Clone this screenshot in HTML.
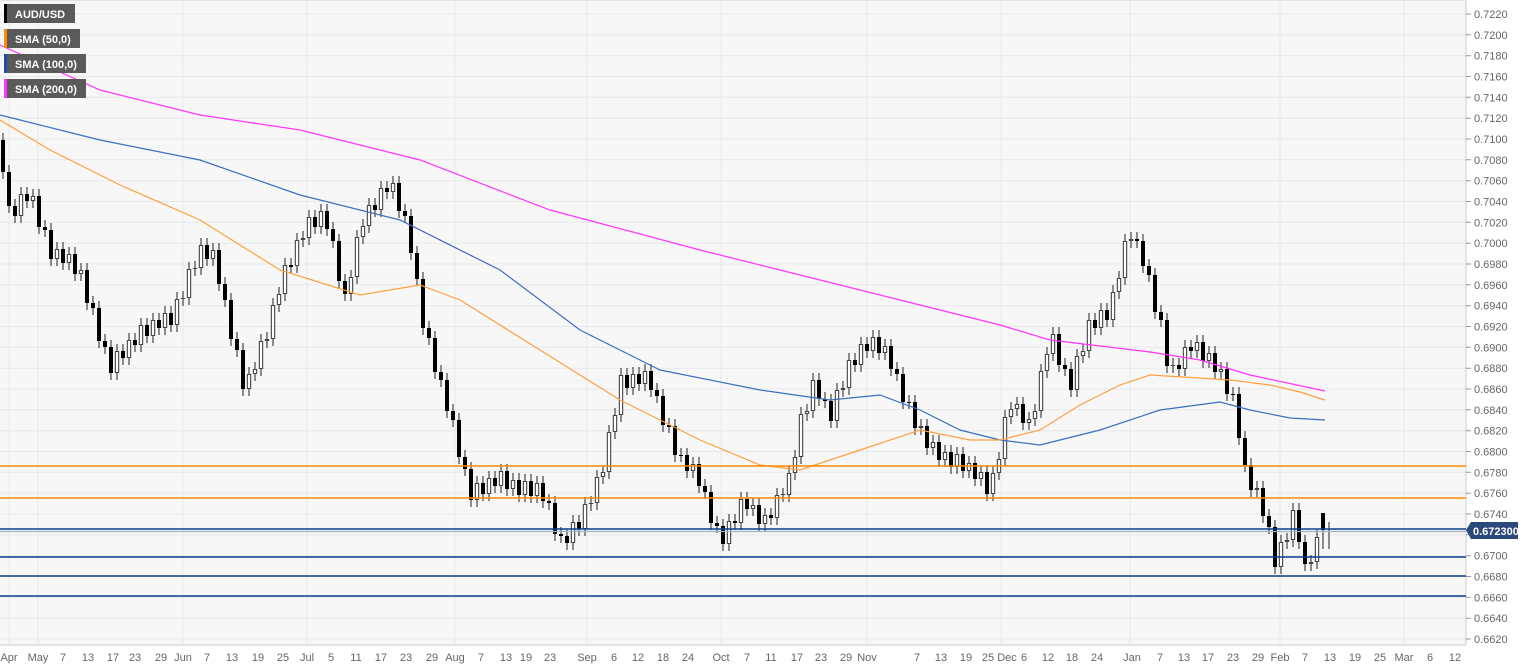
<!DOCTYPE html>
<html><head><meta charset="utf-8"><style>
body{margin:0;background:#fff}
svg{display:block}
text{font-family:"Liberation Sans",sans-serif}
</style></head><body>
<svg width="1536" height="669" xmlns="http://www.w3.org/2000/svg">
<rect x="0" y="0" width="1466" height="645" fill="#f7f7f7"/>
<g stroke="#e6e8ec" stroke-width="1">
<path d="M0 14H1466M0 34.8H1466M0 55.7H1466M0 76.5H1466M0 97.3H1466M0 118.2H1466M0 139H1466M0 159.8H1466M0 180.7H1466M0 201.5H1466M0 222.3H1466M0 243.2H1466M0 264H1466M0 284.8H1466M0 305.7H1466M0 326.5H1466M0 347.3H1466M0 368.2H1466M0 389H1466M0 409.8H1466M0 430.7H1466M0 451.5H1466M0 472.3H1466M0 493.2H1466M0 514H1466M0 534.8H1466M0 555.7H1466M0 576.5H1466M0 597.3H1466M0 618.2H1466M0 639H1466"/>
<path d="M9 0V645M38 0V645M183 0V645M307 0V645M455 0V645M587 0V645M721 0V645M867 0V645M1001 0V645M1130 0V645M1280 0V645M1404 0V645"/>
</g>
<path d="M1466 0V645M0 645H1466" stroke="#ccc" fill="none"/>
<path d="M0 0.5H1466" stroke="#dfe3ea"/>
<g stroke="#999"><path d="M1466 14h5M1466 34.8h5M1466 55.7h5M1466 76.5h5M1466 97.3h5M1466 118.2h5M1466 139h5M1466 159.8h5M1466 180.7h5M1466 201.5h5M1466 222.3h5M1466 243.2h5M1466 264h5M1466 284.8h5M1466 305.7h5M1466 326.5h5M1466 347.3h5M1466 368.2h5M1466 389h5M1466 409.8h5M1466 430.7h5M1466 451.5h5M1466 472.3h5M1466 493.2h5M1466 514h5M1466 534.8h5M1466 555.7h5M1466 576.5h5M1466 597.3h5M1466 618.2h5M1466 639h5"/></g>
<g font-size="11" fill="#666">
<text x="1474" y="18">0.7220</text><text x="1474" y="38.8">0.7200</text><text x="1474" y="59.7">0.7180</text><text x="1474" y="80.5">0.7160</text><text x="1474" y="101.3">0.7140</text><text x="1474" y="122.2">0.7120</text><text x="1474" y="143">0.7100</text><text x="1474" y="163.8">0.7080</text><text x="1474" y="184.7">0.7060</text><text x="1474" y="205.5">0.7040</text><text x="1474" y="226.3">0.7020</text><text x="1474" y="247.2">0.7000</text><text x="1474" y="268">0.6980</text><text x="1474" y="288.8">0.6960</text><text x="1474" y="309.7">0.6940</text><text x="1474" y="330.5">0.6920</text><text x="1474" y="351.3">0.6900</text><text x="1474" y="372.2">0.6880</text><text x="1474" y="393">0.6860</text><text x="1474" y="413.8">0.6840</text><text x="1474" y="434.7">0.6820</text><text x="1474" y="455.5">0.6800</text><text x="1474" y="476.3">0.6780</text><text x="1474" y="497.2">0.6760</text><text x="1474" y="518">0.6740</text><text x="1474" y="559.7">0.6700</text><text x="1474" y="580.5">0.6680</text><text x="1474" y="601.3">0.6660</text><text x="1474" y="622.2">0.6640</text><text x="1474" y="643">0.6620</text>
</g>
<g font-size="11" fill="#666" text-anchor="middle">
<text x="9" y="661">Apr</text><text x="38" y="661">May</text><text x="63" y="661">7</text><text x="88" y="661">13</text><text x="113" y="661">17</text><text x="135" y="661">23</text><text x="161" y="661">29</text><text x="183" y="661">Jun</text><text x="207" y="661">7</text><text x="232" y="661">13</text><text x="258" y="661">19</text><text x="283" y="661">25</text><text x="307" y="661">Jul</text><text x="331" y="661">5</text><text x="356" y="661">11</text><text x="381" y="661">17</text><text x="406" y="661">23</text><text x="432" y="661">29</text><text x="455" y="661">Aug</text><text x="481" y="661">7</text><text x="506" y="661">13</text><text x="526" y="661">19</text><text x="550" y="661">23</text><text x="587" y="661">Sep</text><text x="614" y="661">6</text><text x="638" y="661">12</text><text x="663" y="661">18</text><text x="688" y="661">24</text><text x="721" y="661">Oct</text><text x="747" y="661">7</text><text x="771" y="661">11</text><text x="797" y="661">17</text><text x="821" y="661">23</text><text x="846" y="661">29</text><text x="867" y="661">Nov</text><text x="917" y="661">7</text><text x="941" y="661">13</text><text x="966" y="661">19</text><text x="988" y="661">25</text><text x="1007" y="661">Dec</text><text x="1024" y="661">6</text><text x="1048" y="661">12</text><text x="1072" y="661">18</text><text x="1097" y="661">24</text><text x="1132" y="661">Jan</text><text x="1160" y="661">7</text><text x="1184" y="661">13</text><text x="1208" y="661">17</text><text x="1233" y="661">23</text><text x="1258" y="661">29</text><text x="1280" y="661">Feb</text><text x="1305" y="661">7</text><text x="1330" y="661">13</text><text x="1355" y="661">19</text><text x="1380" y="661">25</text><text x="1404" y="661">Mar</text><text x="1430" y="661">6</text><text x="1455" y="661">12</text>
</g>
<path stroke="#222" stroke-width="1" fill="none" d="M3 133v46M9 165v48M15 199v24M21 187v36M27 187v21M33 189v19M39 189v45M45 220v17M51 223v43M57 242v24M63 242v28M69 247v23M75 247v34M81 263v18M87 263v47M93 296v19M99 301v47M105 334v20M111 340v40M117 344v36M123 344v21M129 333v32M135 333v19M141 318v34M147 318v25M153 313v30M159 313v22M165 306v29M171 306v26M177 292v40M183 291v15M189 262v43M195 261v15M201 238v37M207 238v28M213 243v23M219 243v48M225 277v30M231 293v53M237 332v25M243 343v53M249 367v29M255 362v19M261 334v42M267 332v16M273 298v48M279 287v25M285 258v43M291 258v15M297 233v40M303 231v16M309 210v35M315 210v24M321 204v30M327 204v32M333 222v26M339 234v54M345 274v27M351 270v31M357 230v54M363 219v25M369 198v35M375 198v19M381 181v36M387 181v18M393 176v23M399 176v42M405 204v19M411 209v51M417 246v40M423 272v63M429 321v24M435 331v48M441 365v22M447 373v45M453 404v23M459 413v51M465 450v26M471 462v45M477 476v31M483 476v25M489 471v30M495 471v22M501 464v29M507 464v32M513 473v23M519 473v29M525 474v28M531 474v29M537 476v27M543 476v32M549 494v16M555 496v45M561 527v16M567 529v21M573 515v35M579 515v21M585 497v39M591 496v15M597 470v40M603 465v19M609 425v54M615 408v31M621 368v54M627 368v27M633 367v28M639 367v24M645 364v27M651 364v33M657 383v20M663 389v43M669 418v15M675 419v43M681 448v14M687 448v30M693 457v21M699 457v36M705 479v20M711 485v45M717 516v17M723 519v32M729 514v37M735 514v16M741 492v38M747 492v24M753 498v18M759 498v33M765 508v23M771 508v17M777 488v37M783 488v14M789 466v36M795 450v30M801 407v57M807 404v17M813 373v45M819 373v33M825 392v16M831 394v34M837 383v45M843 381v16M849 353v42M855 353v19M861 337v35M867 337v21M873 330v28M879 330v30M885 339v21M891 339v37M897 362v19M903 367v42M909 395v14M915 395v40M921 419v16M927 419v36M933 435v20M939 435v32M945 445v22M951 445v29M957 447v27M963 447v31M969 456v22M975 456v30M981 465v21M987 465v36M993 466v35M999 452v28M1005 410v56M1011 402v22M1017 397v19M1023 397v33M1029 412v18M1035 404v22M1041 364v54M1047 347v31M1053 327v34M1059 327v45M1065 358v18M1071 362v35M1077 349v48M1083 344v19M1089 313v45M1095 313v22M1101 303v32M1107 303v24M1113 285v42M1119 271v28M1125 234v51M1131 232v16M1137 232v16M1143 234v39M1149 259v23M1155 268v51M1161 305v22M1167 313v60M1173 358v15M1179 358v18M1185 340v36M1191 340v18M1197 335v23M1203 335v33M1209 346v22M1215 346v33M1221 362v17M1227 362v39M1233 387v14M1239 387v58M1245 431v41M1251 458v39M1257 481v16M1263 481v42M1269 509v25M1275 520v54M1281 535v39M1287 533v16M1293 503v44M1299 503v46M1305 535v36M1311 555v16M1317 530v39M1323 530v19M1329 522v27"/>
<path stroke="#000" stroke-width="4" fill="none" d="M3 140V172M9 172V206M15 206V216M27 194V201M39 196V227M45 227V230M51 230V259M63 249V263M75 254V274M87 270V303M93 303V308M99 308V341M105 341V347M111 347V373M123 351V358M135 340V345M147 325V336M159 320V328M171 313V325M207 245V259M219 250V284M225 284V300M231 300V339M237 339V350M243 350V389M291 265V267M315 217V227M327 211V229M333 229V241M339 241V281M345 281V294M375 205V210M387 188V192M399 183V211M405 211V216M411 216V253M417 253V279M423 279V328M429 328V338M435 338V372M441 372V380M447 380V411M453 411V420M459 420V457M465 457V469M471 469V500M483 483V494M495 478V486M507 471V489M519 480V495M531 481V496M543 483V501M549 501V503M555 503V534M561 534V536M567 536V543M579 522V529M627 375V388M639 374V384M651 371V390M657 390V396M663 396V425M669 425V427M675 426V455M681 455V456M687 455V471M699 464V486M705 486V492M711 492V523M717 523V526M723 526V544M735 521V523M747 499V509M759 505V524M771 515V518M819 380V399M825 399V401M831 401V421M855 360V365M867 344V351M879 337V353M891 346V369M897 369V374M903 374V402M909 402V403M915 402V428M927 426V448M939 442V460M951 452V467M963 454V471M975 463V479M987 472V494M1023 404V423M1059 334V365M1065 365V369M1071 369V390M1095 320V328M1107 310V320M1137 239V241M1143 241V266M1149 266V275M1155 275V312M1161 312V320M1167 320V366M1179 365V369M1191 347V351M1203 342V361M1215 353V372M1227 369V394M1233 394V395M1239 394V438M1245 438V465M1251 465V490M1263 488V516M1269 516V527M1275 527V567M1299 510V542M1305 542V564M1323 513V530"/>
<path id="wb" stroke="#444" stroke-width="4.4" fill="none" d="M21 194V216M33 196V201M57 249V259M69 254V263M81 270V274M117 351V373M129 340V358M141 325V345M153 320V336M165 313V328M177 299V325M183 298V299M189 269V298M195 268V269M201 245V268M213 250V259M249 374V389M255 369V374M261 341V369M267 339V341M273 305V339M279 294V305M285 265V294M297 240V266M303 238V240M309 217V238M321 211V227M351 277V294M357 237V277M363 226V237M369 205V226M381 188V210M393 183V192M477 483V500M489 478V494M501 471V486M513 480V489M525 481V495M537 483V496M573 522V543M585 504V529M591 503V504M597 477V503M603 472V477M609 432V472M615 415V432M621 375V415M633 374V388M645 371V384M693 464V471M729 521V544M741 499V523M753 505V509M765 515V524M777 495V518M783 494V495M789 473V495M795 457V473M801 414V457M807 411V414M813 380V411M837 390V421M843 388V390M849 360V388M861 344V365M873 337V351M885 346V353M921 426V428M933 442V448M945 452V460M957 454V467M969 463V471M981 472V479M993 473V494M999 459V473M1005 417V459M1011 409V417M1017 404V409M1029 419V423M1035 411V419M1041 371V411M1047 354V371M1053 334V354M1077 356V390M1083 351V356M1089 320V351M1101 310V328M1113 292V320M1119 278V292M1125 241V278M1131 239V241M1173 365V366M1185 347V369M1197 342V351M1209 353V361M1221 369V372M1257 488V490M1281 542V567M1287 540V542M1293 510V540M1311 562V564M1317 537V562"/>
<path stroke="#fff" stroke-width="2.2" fill="none" d="M21 195V215M33 197V200M57 250V258M69 255V262M81 271V273M117 352V372M129 341V357M141 326V344M153 321V335M165 314V327M177 300V324M189 270V297M201 246V267M213 251V258M249 375V388M255 370V373M261 342V368M273 306V338M279 295V304M285 266V293M297 241V265M309 218V237M321 212V226M351 278V293M357 238V276M363 227V236M369 206V225M381 189V209M393 184V191M477 484V499M489 479V493M501 472V485M513 481V488M525 482V494M537 484V495M573 523V542M585 505V528M597 478V502M603 473V476M609 433V471M615 416V431M621 376V414M633 375V387M645 372V383M693 465V470M729 522V543M741 500V522M753 506V508M765 516V523M777 496V517M789 474V494M795 458V472M801 415V456M807 412V413M813 381V410M837 391V420M849 361V387M861 345V364M873 338V350M885 347V352M933 443V447M945 453V459M957 455V466M969 464V470M981 473V478M993 474V493M999 460V472M1005 418V458M1011 410V416M1017 405V408M1029 420V422M1035 412V418M1041 372V410M1047 355V370M1053 335V353M1077 357V389M1083 352V355M1089 321V350M1101 311V327M1113 293V319M1119 279V291M1125 242V277M1185 348V368M1197 343V350M1209 354V360M1221 370V371M1281 543V566M1293 511V539M1317 538V561"/>
<g fill="none" stroke-width="1.2">
<polyline stroke="#ff33ff" points="0,45 100,90 200,115 300,130 420,160 550,210 700,250 780,270 900,300 1000,325 1050,340 1150,352 1200,360 1250,375 1325,391"/>
<polyline stroke="#3a6fc0" points="0,115 100,140 200,160 300,195 400,220 500,270 580,330 660,370 760,390 830,400 880,395 920,410 960,430 1000,440 1040,445 1100,430 1160,410 1220,402 1250,410 1290,418 1325,420"/>
<polyline stroke="#ffa040" points="0,120 50,150 120,185 200,220 280,270 360,295 420,285 460,300 540,350 620,400 700,440 760,465 800,470 860,450 920,430 970,440 1000,440 1040,430 1080,405 1120,385 1150,375 1200,378 1230,380 1270,385 1300,392 1325,400"/>
</g>
<g stroke-width="1.6">
<path d="M0 466H1466M0 498H1466" stroke="#ff8c00"/>
<path d="M0 529H1466M0 557H1466M0 576H1466M0 596H1466" stroke="#0b3c8c"/>
</g>
<path d="M0 531.5H1466" stroke="#9fb0c8" stroke-width="1.2"/>
<path d="M1466 530 L1471 522 H1518 V539 H1471 Z" fill="#2b4a7b"/>
<text x="1473" y="535" font-size="11" font-weight="bold" fill="#fff">0.672300</text>
<g font-size="11" font-weight="bold" fill="#fff">
<rect x="4" y="4" width="71" height="19" fill="#5a5a5a"/><rect x="4" y="4" width="3" height="19" fill="#000"/><text x="15" y="18">AUD/USD</text>
<rect x="4" y="29" width="76" height="19" fill="#5a5a5a"/><rect x="4" y="29" width="3" height="19" fill="#ff8c00"/><text x="15" y="43">SMA (50,0)</text>
<rect x="4" y="54" width="82" height="19" fill="#5a5a5a"/><rect x="4" y="54" width="3" height="19" fill="#1c4fb0"/><text x="15" y="68">SMA (100,0)</text>
<rect x="4" y="79" width="82" height="19" fill="#5a5a5a"/><rect x="4" y="79" width="3" height="19" fill="#ff33ff"/><text x="15" y="93">SMA (200,0)</text>
</g>
</svg>
</body></html>
